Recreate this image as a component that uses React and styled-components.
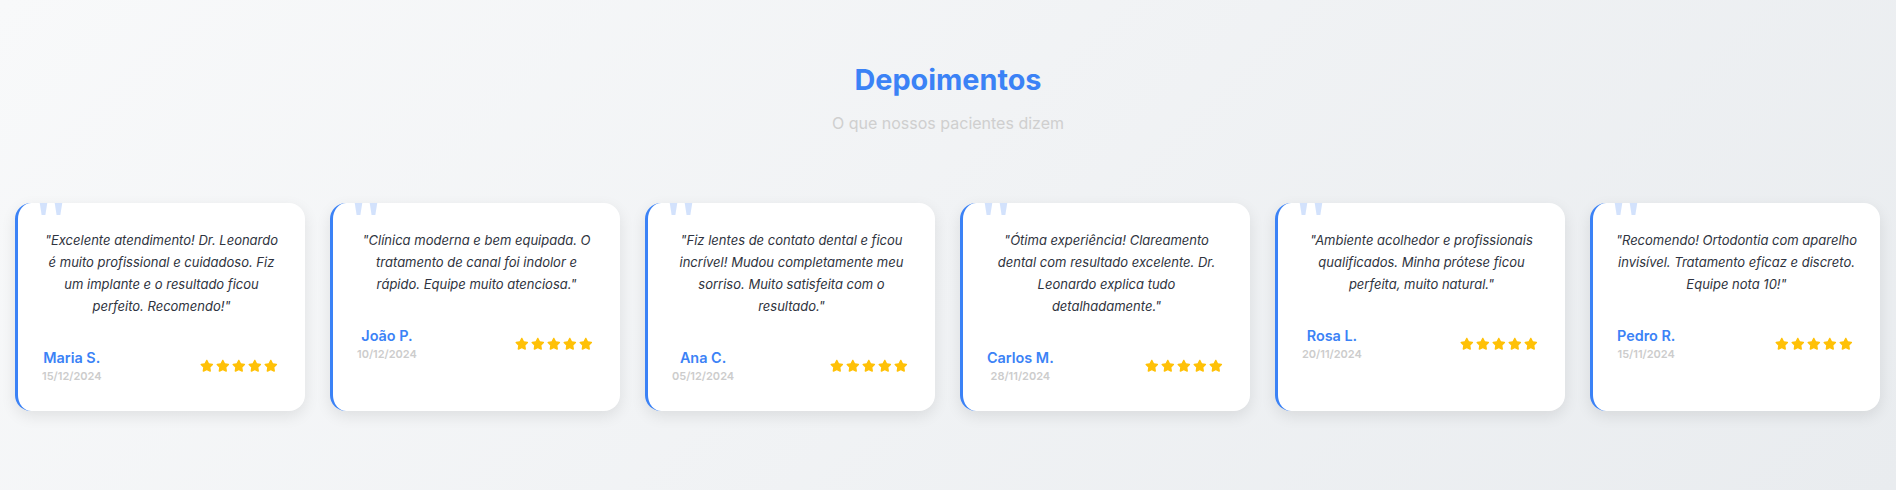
import React from 'react'
import styled, { createGlobalStyle } from 'styled-components'
import { FaStar } from 'react-icons/fa'

const GlobalStyle = createGlobalStyle`
  * { box-sizing: border-box; }
  html, body {
    margin: 0;
    padding: 0;
  }
  body {
    font-family: Inter, "Noto Sans", sans-serif;
    background: linear-gradient(135deg, #f8f9fa 0%, #e9ecef 100%);
    min-height: 100vh;
  }
`

const testimonials = [
  {
    text: '"Excelente atendimento! Dr. Leonardo é muito profissional e cuidadoso. Fiz um implante e o resultado ficou perfeito. Recomendo!"',
    name: 'Maria S.',
    date: '15/12/2024',
  },
  {
    text: '"Clínica moderna e bem equipada. O tratamento de canal foi indolor e rápido. Equipe muito atenciosa."',
    name: 'João P.',
    date: '10/12/2024',
  },
  {
    text: '"Fiz lentes de contato dental e ficou incrível! Mudou completamente meu sorriso. Muito satisfeita com o resultado."',
    name: 'Ana C.',
    date: '05/12/2024',
  },
  {
    text: '"Ótima experiência! Clareamento dental com resultado excelente. Dr. Leonardo explica tudo detalhadamente."',
    name: 'Carlos M.',
    date: '28/11/2024',
  },
  {
    text: '"Ambiente acolhedor e profissionais qualificados. Minha prótese ficou perfeita, muito natural."',
    name: 'Rosa L.',
    date: '20/11/2024',
  },
  {
    text: '"Recomendo! Ortodontia com aparelho invisível. Tratamento eficaz e discreto. Equipe nota 10!"',
    name: 'Pedro R.',
    date: '15/11/2024',
  },
]

export default function App() {
  return (
    <>
      <GlobalStyle />
      <Section>
        <Header>
          <Title>Depoimentos</Title>
          <Subtitle>O que nossos pacientes dizem</Subtitle>
        </Header>
        <Track>
          {testimonials.map((t) => (
            <Card key={t.name}>
              <Quote>"</Quote>
              <Text>{t.text}</Text>
              <Footer>
                <Author>
                  <Name>{t.name}</Name>
                  <DateLabel>{t.date}</DateLabel>
                </Author>
                <Stars>
                  {[0, 1, 2, 3, 4].map((i) => (
                    <FaStar key={i} />
                  ))}
                </Stars>
              </Footer>
            </Card>
          ))}
        </Track>
      </Section>
    </>
  )
}

const Section = styled.section`
  padding: 63px 0 60px;
`

const Header = styled.div`
  text-align: center;
  margin-bottom: 70px;
`

const Title = styled.h2`
  margin: 0 0 15px;
  font-size: 28.8px;
  line-height: 1.2;
  font-weight: 700;
  color: #3b82f6;
`

const Subtitle = styled.p`
  margin: 0;
  font-size: 16px;
  color: #cfcfcf;
`

const Track = styled.div`
  display: flex;
  gap: 25px;
  padding: 0 16px 0 15px;
`

const Card = styled.div`
  position: relative;
  flex: 1;
  background: #ffffff;
  border-left: 3px solid #3b82f6;
  border-radius: 16px;
  padding: 26px 22px 28px 22px;
  box-shadow: 0 5px 15px rgba(0, 0, 0, 0.09);
  overflow: hidden;
  text-align: center;
`

const Quote = styled.span`
  position: absolute;
  top: -18px;
  left: 13px;
  font-family: "Liberation Serif", serif;
  font-size: 72px;
  line-height: 1;
  font-weight: 700;
  color: #d3e2fc;
`

const Text = styled.p`
  position: relative;
  margin: 0 0 32px;
  font-size: 13px;
  line-height: 22px;
  font-style: italic;
  color: #2f3440;
`

const Footer = styled.div`
  display: flex;
  align-items: center;
  justify-content: space-between;
  padding: 0 2px;
`

const Author = styled.div`
  text-align: center;
`

const Name = styled.div`
  font-size: 14.4px;
  line-height: 17px;
  font-weight: 600;
  color: #3b82f6;
`

const DateLabel = styled.div`
  margin-top: 4px;
  font-size: 11px;
  line-height: 13px;
  font-weight: 600;
  color: #cccccc;
`

const Stars = styled.div`
  display: flex;
  gap: 2.4px;
  padding-right: 3px;
  color: #ffc107;
  font-size: 13.6px;
`
